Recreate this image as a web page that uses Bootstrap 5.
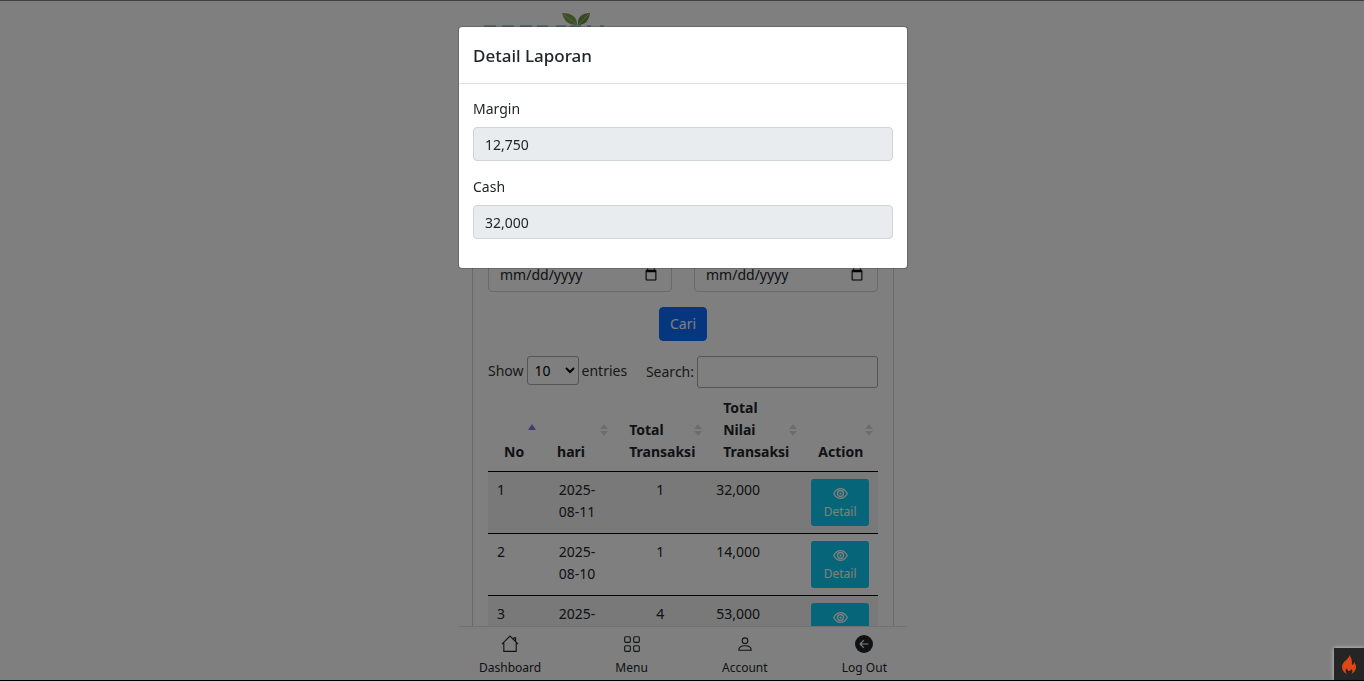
<!DOCTYPE html>
<html lang="en">
<head>
<meta charset="utf-8">
<meta name="viewport" content="width=device-width, initial-scale=1">
<title>Laporan</title>
<link href="https://cdn.jsdelivr.net/npm/bootstrap@5.3.0/dist/css/bootstrap.min.css" rel="stylesheet">
<style>
  html { font-size: 14px; }
  body { font-family: "Segoe UI", "Noto Sans", sans-serif; line-height: 22px; overflow: hidden; }
  .page-gutter { padding-left: 2px; }
  .app-col { max-width: 448px; margin-left: auto; margin-right: auto; }
  .app-shell { height: 100vh; overflow: hidden; padding: 8px 13px 0; }
  .app-head { height: 157px; padding-left: 12px; }
  .report-card { border-radius: 4px; padding: 15px; }
  .report-title { font-size: 18px; line-height: 24px; margin: 0 0 24px; text-align: center; }
  .form-control, .btn-main { padding: 5px 11px; line-height: 22px; font-size: 14px; border-radius: 4px; }
  .form-control { min-height: 34px; border-color: #ced4da; }
  .btn-main { padding: 5px 10px; }
  .date-row { gap: 22px; margin-bottom: 15px; }
  .date-row > div { flex: 1 1 0; min-width: 0; }
  .date-row .form-control { height: 34px; }
  .form-label { margin-bottom: 7px; display: block; }
  .tools { margin-top: 15px; color: #333; }
  .tools label { gap: 3px; }
  .tools select { height: 29px; width: 52px; padding: 0 3px; border: 1px solid #aaa; border-radius: 3px; background: transparent; font-size: 14px; }
  .tools input { height: 32px; width: 181px; border: 1px solid #aaa; border-radius: 3px; background: transparent; }
  .report-table { table-layout: fixed; margin: 9px 0 0; color: #212529; border-color: #000; }
  .report-table th { position: relative; padding: 0 0 8px 16px; vertical-align: bottom; border-bottom: 1px solid #000; }
  .report-table td { padding: 7px 9px; border-bottom: 1px solid #000; }
  .report-table tbody tr:nth-child(odd) td { background: #f2f2f2; box-shadow: none; }
  .sorter { position: absolute; right: 4px; bottom: 34px; }
  .btn-detail { background: #0dcaf0; color: #fff; border: 0; border-radius: 3px; width: 58px; height: 47px; font-size: 12px; line-height: 20px; padding: 4px 0; }
  .report-table td:last-child { padding: 7px 0; }
  .btn-detail svg { display: block; margin: 2px auto 1px; }
  .tabbar { height: 55px; padding: 8px 20px 0; border-top: 1px solid #dee2e6; background: #fff; font-size: 12px; }
  .tabbar a { color: #212529; text-decoration: none; text-align: center; line-height: 20px; }
  .tabbar svg { display: block; margin: 0 auto 5px; }
  .report-dialog { max-width: 450px; margin-top: 26px; }
  .report-dialog .modal-content { border-radius: 4px; }
  .report-dialog .modal-header { padding: 16px 14px 15px; }
  .report-dialog .modal-title { font-size: 17px; line-height: 25px; font-weight: 500; }
  .report-dialog .modal-body { padding: 14px 14px 29px; }
  .report-dialog .form-control { background: #e9ecef; height: 34px; }
  .report-dialog .field + .field { margin-top: 15px; }
  .ci-button { z-index: 2000; width: 30px; height: 33px; background: #252525; box-shadow: 0 0 4px #ccc; }
  .window-edge { z-index: 2001; border-top: 1px solid #404040; border-bottom: 1px solid #000; pointer-events: none; }
</style>
</head>
<body>
<svg class="d-none">
  <symbol id="eye" viewBox="0 0 16 16"><g fill="none" stroke="currentColor" stroke-width="1.400"><path d="M.8 8S3.500 2.800 8 2.800 15.200 8 15.200 8 12.500 13.200 8 13.200.8 8 .8 8z"/><circle cx="8" cy="8" r="3.200"/></g><circle cx="8" cy="8" r="1.200" fill="currentColor"/></symbol>
  <symbol id="sort" viewBox="0 0 10 14"><path d="M5 1l4 5H1zM5 13l4-5H1z" fill="#dadada"/></symbol>
</svg>

<div class="page-gutter">
<div class="app-col app-shell">
  <header class="app-head">
    <svg width="124" height="50" viewBox="0 0 124 50" role="img" aria-label="Logo">
      <path d="M93 17C83 17 80 12 78 5c9 0 15 3 15 12z" fill="#7d9f4e"/>
      <path d="M94 17c-1-8 4-12 12-12-1 7-4 12-12 12z" fill="#6f9444"/>
      <path d="M79 6l13 10M105 6L95 16" stroke="#a9c283" fill="none"/>
      <path d="M0 18h12M18 18h12M36 18h12M53 18h11M72 18h10M86 18h11M103 18h4M116 18h4" stroke="#4f9fb0" stroke-width="1"/>
    </svg>
  </header>
  <main class="card report-card">
    <h1 class="report-title">Laporan Transaksi</h1>
    <div class="d-flex date-row">
      <div><label class="form-label" for="from">Dari</label><input class="form-control" type="date" id="from"></div>
      <div><label class="form-label" for="to">Sampai</label><input class="form-control" type="date" id="to"></div>
    </div>
    <div class="text-center"><button class="btn btn-primary btn-main" type="button">Cari</button></div>
    <div class="tools d-flex justify-content-between align-items-start">
      <label class="d-flex align-items-center">Show
        <select><option>10</option><option>25</option></select> entries</label>
      <label class="d-flex align-items-center">Search:<input type="search"></label>
    </div>
    <table class="table report-table">
      <colgroup><col style="width:13.600%"><col style="width:18.500%"><col style="width:24.100%"><col style="width:24.400%"><col style="width:19.400%"></colgroup>
      <thead><tr>
        <th>No<svg class="sorter" width="10" height="14" viewBox="0 0 10 14"><path d="M5 1l4 6H1z" fill="#7c7cdc"/></svg></th>
        <th>hari<svg class="sorter" width="10" height="14"><use href="#sort"/></svg></th>
        <th>Total Transaksi<svg class="sorter" width="10" height="14"><use href="#sort"/></svg></th>
        <th>Total<br>Nilai<br>Transaksi<svg class="sorter" width="10" height="14"><use href="#sort"/></svg></th>
        <th>Action<svg class="sorter" width="10" height="14"><use href="#sort"/></svg></th>
      </tr></thead>
      <tbody>
        <tr><td>1</td><td class="text-center">2025-<br>08-11</td><td class="text-center">1</td><td>32,000</td><td class="text-center"><button class="btn-detail" type="button"><svg width="15" height="15"><use href="#eye"/></svg>Detail</button></td></tr>
        <tr><td>2</td><td class="text-center">2025-<br>08-10</td><td class="text-center">1</td><td>14,000</td><td class="text-center"><button class="btn-detail" type="button"><svg width="15" height="15"><use href="#eye"/></svg>Detail</button></td></tr>
        <tr><td>3</td><td class="text-center">2025-<br>08-09</td><td class="text-center">4</td><td>53,000</td><td class="text-center"><button class="btn-detail" type="button"><svg width="15" height="15"><use href="#eye"/></svg>Detail</button></td></tr>
      </tbody>
    </table>
  </main>
</div>
</div>

<nav class="fixed-bottom page-gutter">
  <div class="app-col tabbar d-flex justify-content-between">
    <a href="#"><svg width="18" height="18" viewBox="0 0 16 16" fill="none" stroke="currentColor"><path d="M.8 8.200L8 1l7.200 7.200M2.500 6.800v7.700h11V6.800M11.500 4V2.500h1.500v3"/></svg>Dashboard</a>
    <a href="#"><svg width="18" height="18" viewBox="0 0 16 16" fill="none" stroke="currentColor"><rect x="1.500" y="1.500" width="5" height="5" rx="1"/><rect x="9.500" y="1.500" width="5" height="5" rx="1"/><rect x="1.500" y="9.500" width="5" height="5" rx="1"/><rect x="9.500" y="9.500" width="5" height="5" rx="1"/></svg>Menu</a>
    <a href="#"><svg width="18" height="18" viewBox="0 0 16 16" fill="none" stroke="currentColor"><circle cx="8" cy="5" r="2.500"/><path d="M2.500 13.500h11c0-2.500-2-4-5.500-4s-5.500 1.500-5.500 4z"/></svg>Account</a>
    <a href="#"><svg width="18" height="18" viewBox="0 0 16 16"><circle cx="8" cy="8" r="8" fill="currentColor"/><path d="M11.500 8h-7M7.500 5l-3 3 3 3" fill="none" stroke="#fff" stroke-linecap="round" stroke-linejoin="round"/></svg>Log Out</a>
  </div>
</nav>

<div class="modal-backdrop show"></div>
<div class="modal d-block page-gutter" tabindex="-1" role="dialog" aria-labelledby="dlgTitle">
  <div class="modal-dialog report-dialog">
    <div class="modal-content">
      <div class="modal-header"><h5 class="modal-title" id="dlgTitle">Detail Laporan</h5></div>
      <div class="modal-body">
        <div class="field"><label class="form-label" for="margin">Margin</label><input class="form-control" id="margin" value="12,750" readonly></div>
        <div class="field"><label class="form-label" for="cash">Cash</label><input class="form-control" id="cash" value="32,000" readonly></div>
      </div>
    </div>
  </div>
</div>

<a href="#" class="ci-button position-fixed bottom-0 end-0 d-flex align-items-center justify-content-center" aria-label="Debug toolbar">
  <svg width="16" height="20" viewBox="0 0 16 20"><path d="M8 0c1 4-7 6-7 12 0 3 2 6 5 7-2-2-2-4 0-6 0 2 1 3 2 3s2-1 2-2c2 1 2 4 0 5 3-1 5-4 5-7 0-2-1-4-2-5 0 2-1 3-2 3 0-4 0-7-3-10z" fill="#dd4814"/></svg>
</a>
<div class="window-edge position-fixed top-0 bottom-0 start-0 end-0"></div>
<script src="https://cdn.jsdelivr.net/npm/bootstrap@5.3.0/dist/js/bootstrap.bundle.min.js"></script>
</body>
</html>
